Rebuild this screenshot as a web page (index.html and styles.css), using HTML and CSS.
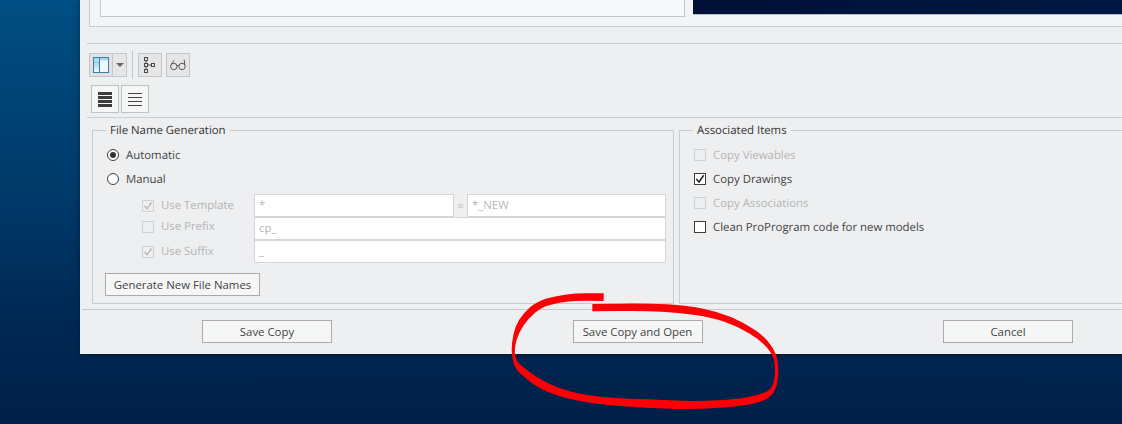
FILE: index.html
```html
<!DOCTYPE html>
<html lang="en">
<head>
<meta charset="utf-8">
<title>Save a Copy</title>
<link rel="stylesheet" href="styles.css">
</head>
<body>
<div class="desk">
  <div class="dialog">
    <div class="preview-panel">
      <div class="list-box"></div>
      <div class="preview"></div>
    </div>
    <div class="sep sep-first"></div>
    <div class="toolbar">
      <div class="split">
        <span class="tool tool-main">
          <svg width="16" height="16" viewBox="0 0 16 16"><defs><linearGradient id="pane" x1="0" y1="0" x2="0" y2="1"><stop offset="0" stop-color="#8ccbee"/><stop offset="1" stop-color="#f4fafd"/></linearGradient></defs><rect x="0.5" y="0.5" width="15" height="15" fill="#eef6fa" stroke="#3b7ea8"/><rect x="1" y="1" width="14" height="2.5" fill="#a9d6ee"/><rect x="1" y="4" width="5" height="11" fill="url(#pane)"/><path d="M6.500 1v14" stroke="#3b7ea8"/></svg>
        </span>
        <span class="tool tool-arrow"><svg width="8" height="4" viewBox="0 0 8 4"><path d="M0 0h8L4 4z" fill="#666"/></svg></span>
      </div>
      <div class="vbar"></div>
      <span class="tool">
        <svg width="12" height="16" viewBox="0 0 12 16" fill="none" stroke="#4a4a4a"><rect x="0.500" y="0.500" width="3" height="3"/><rect x="0.500" y="6.500" width="3" height="3"/><rect x="0.500" y="12.500" width="3" height="3"/><rect x="7.500" y="6.500" width="3" height="3"/><path d="M2 4v2.500M2 10v2.500M4 8h3.500"/></svg>
      </span>
      <span class="tool">
        <svg width="16" height="12" viewBox="0 0 16 12" fill="none" stroke="#555"><circle cx="3.800" cy="7.500" r="3.200"/><circle cx="12" cy="7.500" r="3.200"/><path d="M7 7q1-1 2 0M1.500 5 4 1.500M14.800 6 14.200 .8"/></svg>
      </span>
    </div>
    <div class="view-row">
      <span class="view-btn"><svg width="14" height="15" viewBox="0 0 14 15"><path d="M0 0h14v3H0zM0 4h14v3H0zM0 8h14v3H0zM0 12h14v3H0z" fill="#3c3c3c"/></svg></span>
      <span class="view-btn"><svg width="14" height="13" viewBox="0 0 14 13"><path d="M0 .5h14M0 4.500h14M0 8.500h14M0 12.500h14" stroke="#444"/></svg></span>
    </div>
    <div class="sep"></div>
    <div class="groups">
      <fieldset class="group group-names">
        <legend>File Name Generation</legend>
        <div class="radio-row"><span class="radio radio-on"></span>Automatic</div>
        <div class="radio-row"><span class="radio"></span>Manual</div>
        <div class="name-grid">
          <div class="check-label off"><span class="check check-off"><svg width="10" height="10" viewBox="0 0 10 10"><path d="M1.500 5 4 7.800 8.500 1.500" fill="none" stroke="#b5b5b5" stroke-width="1.300"/></svg></span>Use Template</div>
          <div class="pair">
            <div class="field">*</div>
            <span class="equals">=</span>
            <div class="field">*_NEW</div>
          </div>
          <div class="check-label off raised"><span class="check check-off"></span>Use Prefix</div>
          <div class="field">cp_</div>
          <div class="check-label off"><span class="check check-off"><svg width="10" height="10" viewBox="0 0 10 10"><path d="M1.500 5 4 7.800 8.500 1.500" fill="none" stroke="#b5b5b5" stroke-width="1.300"/></svg></span>Use Suffix</div>
          <div class="field">_</div>
        </div>
        <button class="btn btn-generate" type="button">Generate New File Names</button>
      </fieldset>
      <fieldset class="group group-items">
        <legend>Associated Items</legend>
        <div class="item off"><span class="check check-off"></span>Copy Viewables</div>
        <div class="item"><span class="check"><svg width="10" height="10" viewBox="0 0 10 10"><path d="M1.300 5 4 8 8.700 1.200" fill="none" stroke="#222" stroke-width="1.500"/></svg></span>Copy Drawings</div>
        <div class="item off"><span class="check check-off"></span>Copy Associations</div>
        <div class="item"><span class="check"></span>Clean ProProgram code for new models</div>
      </fieldset>
    </div>
    <div class="sep sep-foot"></div>
    <div class="footer">
      <button class="btn btn-foot" type="button">Save Copy</button>
      <button class="btn btn-foot" type="button">Save Copy and Open</button>
      <button class="btn btn-foot" type="button">Cancel</button>
    </div>
  </div>
  <svg class="scribble" width="300" height="140" viewBox="0 0 900 420"><path fill="#fb0007" d="M311 40L260 40Q225 40 195 44Q165 48 137 56Q110 65 90 82Q70 100 57 120Q45 140 40 165Q35 190 35 210Q35 230 40 247Q45 265 60 280Q75 295 100 312Q125 330 160 342Q195 355 240 363Q285 372 360 378Q435 385 510 386Q585 388 650 384Q715 380 755 372Q795 365 812 347Q830 330 833 300Q837 270 833 245Q830 220 812 195Q795 170 765 150Q735 130 695 112Q655 95 610 86Q565 77 500 73Q435 70 360 71L277 72L277 94L360 93Q435 92 485 95Q535 98 585 105Q635 112 675 126Q715 140 747 160Q780 180 800 202Q820 225 823 247Q827 270 823 295Q820 320 807 330Q795 340 755 349Q715 358 650 361Q585 365 510 361Q435 357 390 356Q345 355 300 350Q255 345 215 335Q175 325 145 310Q115 295 92 278Q70 262 58 251Q47 240 45 222Q43 205 49 182Q55 160 70 137Q85 115 105 98Q125 82 150 75Q175 68 200 65Q225 62 260 62L311 63Z"/></svg>
</div>
</body>
</html>
```
FILE: styles.css
```css
* { box-sizing: border-box; }
html, body { margin: 0; padding: 0; }
body { width: 1122px; height: 424px; overflow: hidden; font-family: "Open Sans", "Noto Sans", sans-serif; font-size: 11.4px; color: #444; text-rendering: geometricPrecision; }

.desk {
  position: relative;
  width: 1122px;
  height: 424px;
  overflow: hidden;
  padding-left: 80px;
  background: linear-gradient(180deg, #004e82 0, #003a6a 45%, #002a56 72%, #001f47 100%);
}

.dialog {
  width: 1100px;
  height: 354px;
  background: #eeeff0;
  box-shadow: 0 1px 6px rgba(0, 0, 0, .35);
}

.preview-panel {
  display: flex;
  align-items: flex-start;
  height: 27px;
  margin-left: 9px;
  padding-left: 10px;
  background: #f3f4f5;
  border-left: 1px solid #c9cbcc;
  border-bottom: 1px solid #c9cbcc;
}
.list-box { flex: none; width: 585px; height: 17px; background: #f7f8f9; border: 1px solid #c4c6c7; border-top: 0; }
.preview { flex: none; width: 500px; height: 15px; margin-left: 8px; background: linear-gradient(90deg, #001037, #001a44); border-bottom: 1px solid #b5bcc5; }

.sep { height: 1px; background: #c9cbcc; margin-left: 7px; }
.sep-first { margin-top: 16px; }

.toolbar { display: flex; align-items: center; height: 28px; margin: 7px 0 0 9px; gap: 4px; }
.split { display: flex; }
.tool { display: flex; align-items: center; justify-content: center; width: 24px; height: 24px; background: #e4e6e7; border: 1px solid #c4c6c7; }
.tool-main { background: #dfe1e3; }
.tool-arrow { width: 14px; border-left: 0; }
.vbar { width: 1px; height: 28px; background: #c4c6c7; margin: 0 1px; }

.view-row { display: flex; gap: 2px; margin: 6px 0 4px 11px; }
.view-btn { display: flex; align-items: center; justify-content: center; width: 28px; height: 28px; background: #f5f6f6; border: 1px solid #bfc1c2; }

.groups { display: flex; gap: 5px; margin: 4px 0 0 12px; }
.group { margin: 0; padding: 0; height: 182px; border: 1px solid #c9cbcc; min-inline-size: 0; }
.group legend { margin: 0 0 -1px 1px; padding: 1px 4px 0; line-height: 16px; font-size: 11.4px; color: #333; }
.group-names { width: 582px; padding: 5px 7px 0 12px; }
.group-items { width: 460px; padding: 5px 0 0 14px; }
.group-items legend { margin-left: -1px; }

.radio-row { display: flex; align-items: center; height: 24px; gap: 7px; padding-left: 2px; }
.radio { width: 12px; height: 12px; border-radius: 50%; background: #fff; border: 1px solid #3d3d3d; display: flex; align-items: center; justify-content: center; }
.radio-on::after { content: ""; width: 6px; height: 6px; border-radius: 50%; background: #333; }

.name-grid { display: grid; grid-template-columns: 149px 412px; grid-auto-rows: 23px; margin-top: 3px; }
.check-label { display: flex; align-items: center; gap: 7px; padding-left: 37px; white-space: nowrap; }
.raised { padding-bottom: 4px; }
.off { color: #b4b6b7; }
.check { flex: none; display: flex; align-items: center; justify-content: center; width: 12px; height: 12px; background: #fff; border: 1px solid #3d3d3d; }
.check-off { background: #eeeff0; border-color: #cfd1d2; }
.pair { display: flex; }
.pair .field { width: 200px; }
.pair .field:last-child { width: 199px; }
.equals { width: 13px; text-align: center; color: #b4b6b7; line-height: 25px; }
.field { height: 23px; padding-left: 4px; line-height: 21px; background: #fff; border: 1px solid #d3d5d6; color: #b4b6b7; }

.btn { display: block; padding: 0; height: 23px; font: inherit; color: #444; background: #f5f6f6; border: 1px solid #ababab; }
.btn-generate { width: 155px; margin-top: 10px; }

.item { display: flex; align-items: center; gap: 7px; height: 24px; }

.sep-foot { margin: 5px 0 0 2px; }
.footer { display: flex; justify-content: space-between; margin: 10px 0 0 122px; width: 871px; }
.btn-foot { width: 130px; }

.scribble { position: absolute; left: 500px; top: 280px; }
```
